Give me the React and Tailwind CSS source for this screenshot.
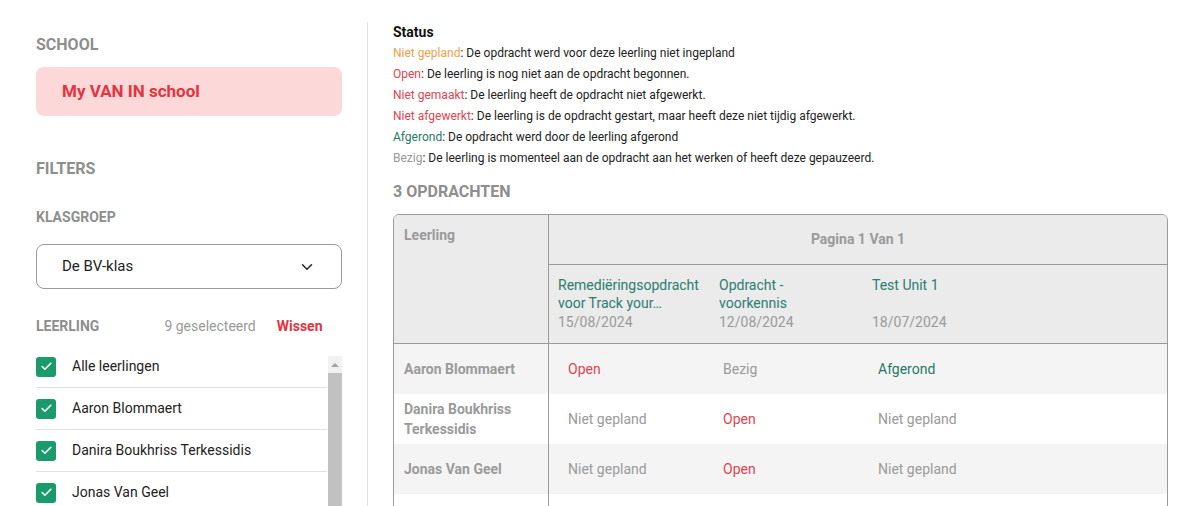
import React from "react";
import { ChevronDown, Check } from "lucide-react";

const students = ["Alle leerlingen", "Aaron Blommaert", "Danira Boukhriss Terkessidis", "Jonas Van Geel"];

const legend = [
  ["Niet gepland", "text-[#f0a04b]", "De opdracht werd voor deze leerling niet ingepland"],
  ["Open", "text-[#e2434f]", "De leerling is nog niet aan de opdracht begonnen."],
  ["Niet gemaakt", "text-[#e2434f]", "De leerling heeft de opdracht niet afgewerkt."],
  ["Niet afgewerkt", "text-[#e2434f]", "De leerling is de opdracht gestart, maar heeft deze niet tijdig afgewerkt."],
  ["Afgerond", "text-[#1f7a66]", "De opdracht werd door de leerling afgerond"],
  ["Bezig", "text-[#999999]", "De leerling is momenteel aan de opdracht aan het werken of heeft deze gepauzeerd."],
];

const statusColor = {
  Open: "text-[#e2434f]",
  Bezig: "text-[#9a9a9a]",
  Afgerond: "text-[#1f7a66]",
  "Niet gepland": "text-[#9a9a9a]",
};

const rows = [
  { name: ["Aaron Blommaert"], s: ["Open", "Bezig", "Afgerond"], bg: "bg-[#f4f4f4]" },
  { name: ["Danira Boukhriss", "Terkessidis"], s: ["Niet gepland", "Open", "Niet gepland"], bg: "bg-white" },
  { name: ["Jonas Van Geel"], s: ["Niet gepland", "Open", "Niet gepland"], bg: "bg-[#f4f4f4]" },
  { name: [""], s: ["", "", ""], bg: "bg-white" },
];

export default function App() {
  return (
    <div className="flex h-[506px] w-[1192px] overflow-hidden bg-white font-['Roboto',sans-serif]">
      {/* Sidebar */}
      <div className="w-[367px] shrink-0 pl-[36px] pr-[25px] pt-[33px]">
        <div className="text-[16px] leading-[24px] font-bold text-[#8e8e8e]">SCHOOL</div>
        <div className="mt-[10px] flex h-[49px] items-center rounded-[8px] bg-[#fcd8d8] pl-[26px] text-[17px] font-bold text-[#e3343f]">
          My VAN IN school
        </div>
        <div className="mt-[41px] text-[16px] leading-[24px] font-bold text-[#8e8e8e]">FILTERS</div>
        <div className="mt-[26px] text-[14px] leading-[20px] font-bold text-[#8e8e8e]">KLASGROEP</div>
        <div className="mt-[17px] flex h-[45px] items-center justify-between rounded-[8px] border border-[#9a9a9a] pl-[25px] pr-[25px] text-[15px] text-[#222]">
          <span>De BV-klas</span>
          <ChevronDown size={18} strokeWidth={2} color="#222" />
        </div>
        <div className="mt-[27px] flex items-center text-[14px] leading-[20px]">
          <span className="font-bold text-[#8e8e8e]">LEERLING</span>
          <span className="ml-[65px] text-[#9a9a9a]">9 geselecteerd</span>
          <span className="ml-[21px] font-bold text-[#e3343f]">Wissen</span>
        </div>
        <div className="mt-[10px] flex">
          <div className="w-[291px]">
            {students.map((s) => (
              <div key={s} className="flex h-[42px] items-center border-b border-[#e2e2e2]">
                <div className="flex h-[20px] w-[20px] items-center justify-center rounded-[3px] bg-[#1b9b6b]">
                  <Check size={13} strokeWidth={3} color="#ffffff" />
                </div>
                <span className="ml-[16px] text-[14px] text-[#222]">{s}</span>
              </div>
            ))}
          </div>
          <div className="ml-[1px] mt-[10px] flex w-[14px] flex-col">
            <div className="flex h-[17px] items-center justify-center bg-[#f1f1f1]">
              <div className="h-0 w-0 border-x-[4px] border-b-[4px] border-x-transparent border-b-[#a3a3a3]"></div>
            </div>
            <div className="h-[200px] bg-[#c1c1c1]"></div>
          </div>
        </div>
      </div>

      {/* Main */}
      <div className="mt-[22px] flex-1 border-l border-[#e0e0e0] pl-[25px] pr-[24px]">
        <div className="text-[14px] leading-[20px] font-bold text-[#111]">Status</div>
        <div className="pt-[1px] text-[12px] leading-[21px] text-[#222]">
          {legend.map(([k, c, d]) => (
            <div key={k}>
              <span className={c}>{k}</span>: {d}
            </div>
          ))}
        </div>
        <div className="mt-[11px] text-[16px] leading-[24px] font-bold text-[#8e8e8e]">3 OPDRACHTEN</div>
        <div className="mt-[10px] overflow-hidden rounded-t-[6px] border border-[#9a9a9a]">
          {/* header */}
          <div className="flex bg-[#ebebeb]">
            <div className="w-[155px] shrink-0 border-r border-[#9a9a9a] pl-[10px] pt-[10px] text-[14px] leading-[20px] font-bold text-[#9a9a9a]">
              Leerling
            </div>
            <div className="flex-1">
              <div className="flex h-[50px] items-center justify-center border-b border-[#9a9a9a] text-[14px] font-bold text-[#9a9a9a]">
                Pagina 1 Van 1
              </div>
              <div className="flex h-[78px] pt-[11px] text-[14px] leading-[18px]">
                {[
                  ["Remediëringsopdracht voor Track your…", "15/08/2024", "w-[170px] pl-[9px]"],
                  ["Opdracht - voorkennis", "12/08/2024", "w-[153px] pr-[20px]"],
                  ["Test Unit 1", "18/07/2024", "flex-1"],
                ].map(([t, d, w]) => (
                  <div key={t} className={`${w} shrink-0`}>
                    <div className="h-[37px] overflow-hidden text-[#2a7d6f]">{t}</div>
                    <div className="text-[#9a9a9a]">{d}</div>
                  </div>
                ))}
              </div>
            </div>
          </div>
          {/* body */}
          {rows.map((r, i) => (
            <div key={i} className={`flex ${r.bg} ${i === 0 ? "border-t border-[#9a9a9a]" : ""}`}>
              <div className="flex min-h-[50px] w-[155px] shrink-0 flex-col justify-center border-r border-[#9a9a9a] pl-[10px] text-[14px] leading-[20px] font-bold text-[#9a9a9a]">
                {r.name.map((n, j) => (
                  <div key={j}>{n}</div>
                ))}
              </div>
              <div className="flex flex-1 items-center pl-[19px] text-[14px]">
                {r.s.map((s, j) => (
                  <div key={j} className={`w-[155px] shrink-0 ${statusColor[s] || ""}`}>
                    {s}
                  </div>
                ))}
              </div>
            </div>
          ))}
        </div>
      </div>
    </div>
  );
}
